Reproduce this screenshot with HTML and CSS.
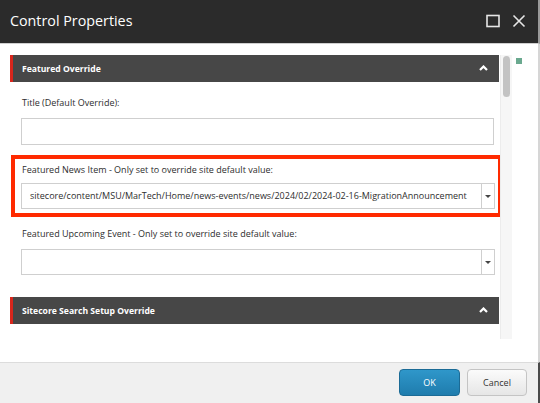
FILE: index.html
```html
<!DOCTYPE html>
<html lang="en">
<head>
<meta charset="utf-8">
<title>Control Properties</title>
<link rel="stylesheet" href="styles.css">
</head>
<body>
<div class="window">
  <header class="titlebar">
    <h1 class="title">Control Properties</h1>
    <div class="title-actions">
      <svg class="ticon" width="14" height="14" viewBox="0 0 14 14" aria-hidden="true"><rect x="1" y="1.5" width="12" height="11" fill="none" stroke="#e6e6e6" stroke-width="1.6"/></svg>
      <svg class="ticon" width="14" height="14" viewBox="0 0 14 14" aria-hidden="true"><path d="M1.5 1.5 L12.5 12.5 M12.5 1.5 L1.5 12.5" stroke="#e6e6e6" stroke-width="1.6" fill="none"/></svg>
    </div>
  </header>
  <main class="main">
    <div class="content">
      <section class="panel">
        <div class="panel-head">
          <span class="panel-title">Featured Override</span>
          <svg class="chev" width="9" height="6" viewBox="0 0 9 6" aria-hidden="true"><path d="M1 5 L4.5 1.5 L8 5" stroke="#fff" stroke-width="2.2" fill="none"/></svg>
        </div>
        <div class="field field-first">
          <label class="label">Title (Default Override):</label>
          <div class="input"></div>
        </div>
        <div class="field field-hl">
          <label class="label">Featured News Item - Only set to override site default value:</label>
          <div class="select">
            <span class="select-value">sitecore/content/MSU/MarTech/Home/news-events/news/2024/02/2024-02-16-MigrationAnnouncement</span>
            <span class="select-btn"><span class="caret"></span></span>
          </div>
        </div>
        <div class="field field-third">
          <label class="label">Featured Upcoming Event - Only set to override site default value:</label>
          <div class="select">
            <span class="select-value"></span>
            <span class="select-btn"><span class="caret"></span></span>
          </div>
        </div>
      </section>
      <section class="panel panel-second">
        <div class="panel-head">
          <span class="panel-title">Sitecore Search Setup Override</span>
          <svg class="chev" width="9" height="6" viewBox="0 0 9 6" aria-hidden="true"><path d="M1 5 L4.5 1.5 L8 5" stroke="#fff" stroke-width="2.2" fill="none"/></svg>
        </div>
      </section>
    </div>
    <div class="scrollbar"><div class="thumb"></div></div>
    <div class="side"><span class="marker"></span></div>
  </main>
  <footer class="footer">
    <button class="btn btn-primary">OK</button>
    <button class="btn btn-default">Cancel</button>
  </footer>
</div>
</body>
</html>
```

FILE: styles.css
```css
* { box-sizing: border-box; }
html, body { margin: 0; padding: 0; }
body {
  width: 540px;
  height: 403px;
  overflow: hidden;
  background: #fff;
  font-family: "Open Sans", "Liberation Sans", sans-serif;
  color: #333;
}
.window {
  width: 540px;
  height: 403px;
  display: flex;
  flex-direction: column;
}
.titlebar {
  height: 44px;
  flex: none;
  background: #2b2b2b;
  border-bottom: 1px solid #cfcfcf;
  border-right: 2px solid #9a9a9a;
  display: flex;
  align-items: center;
  justify-content: space-between;
  padding: 0 12px 0 10px;
}
.title {
  margin: 0;
  font-size: 14.3px;
  font-weight: 400;
  color: #fff;
  line-height: 20px;
  padding-bottom: 1px;
}
.title-actions {
  display: flex;
  gap: 12px;
  align-items: center;
  padding-bottom: 1px;
}
.ticon { display: block; }
.main {
  height: 318px;
  flex: none;
  display: flex;
  border-right: 2px solid #d6d6d6;
  overflow: hidden;
}
.content {
  width: 500px;
  flex: none;
  padding: 11px 1px 0 10px;
  overflow: hidden;
}
.panel-head {
  height: 27px;
  background: #474747;
  border-left: 3px solid #d9261c;
  display: flex;
  align-items: center;
  justify-content: space-between;
  padding: 0 11px 0 9px;
}
.panel-title {
  color: #fff;
  font-size: 8.6px;
  font-weight: 700;
  line-height: 12px;
}
.chev { display: block; margin-top: -1px; }
.field { display: flex; flex-direction: column; gap: 8px; }
.label {
  font-size: 9px;
  line-height: 14px;
  color: #2e2e2e;
  padding-left: 1px;
}
.field-first { margin: 14px 0 0 11px; width: 473px; }
.input {
  height: 27px;
  border: 1px solid #cfcfcf;
  background: #fff;
}
.field-hl {
  margin: 10px 0 0 1px;
  width: 491px;
  border: 4px solid #ff2a00;
  padding: 4px 3px 4px 6px;
  gap: 6px;
}
.field-third { margin: 10px 0 0 11px; width: 474px; }
.select {
  height: 26px;
  border: 1px solid #cfcfcf;
  background: #fff;
  display: flex;
  align-items: stretch;
}
.select-value {
  flex: 1;
  font-size: 9px;
  line-height: 24px;
  padding-left: 8px;
  white-space: nowrap;
  overflow: hidden;
  color: #2e2e2e;
}
.select-btn {
  width: 13px;
  flex: none;
  border-left: 1px solid #cfcfcf;
  display: flex;
  align-items: center;
  justify-content: center;
}
.caret {
  width: 0;
  height: 0;
  border-left: 3px solid transparent;
  border-right: 3px solid transparent;
  border-top: 3px solid #444;
}
.panel-second { margin-top: 22px; }
.scrollbar {
  width: 12px;
  flex: none;
  margin-top: 11px;
  height: 284px;
  background: #f6f6f6;
  border-left: 1px solid #ececec;
  padding: 1px 2px 0 2px;
}
.thumb {
  width: 7px;
  height: 41px;
  background: #c3c3c3;
  border-radius: 4px;
}
.side {
  flex: 1;
  padding: 14px 0 0 4px;
}
.marker {
  display: block;
  width: 6px;
  height: 6px;
  background: #6aa98f;
}
.footer {
  flex: 1;
  background: #f0f0f0;
  border-top: 1px solid #dcdcdc;
  border-right: 2px solid #4a4a4a;
  display: flex;
  justify-content: flex-end;
  align-items: flex-start;
  gap: 7px;
  padding: 6px 11px 0 0;
}
.btn {
  height: 27px;
  border-radius: 4px;
  font-family: "Open Sans", "Liberation Sans", sans-serif;
  font-size: 9px;
  padding: 0;
  margin: 0;
  cursor: pointer;
}
.btn-primary {
  width: 61px;
  color: #fff;
  background: linear-gradient(#2f97ca, #1f7cad);
  border: 1px solid #1b6b96;
}
.btn-default {
  width: 60px;
  color: #333;
  background: linear-gradient(#fbfbfb, #e6e6e6);
  border: 1px solid #c4c4c4;
}
```
